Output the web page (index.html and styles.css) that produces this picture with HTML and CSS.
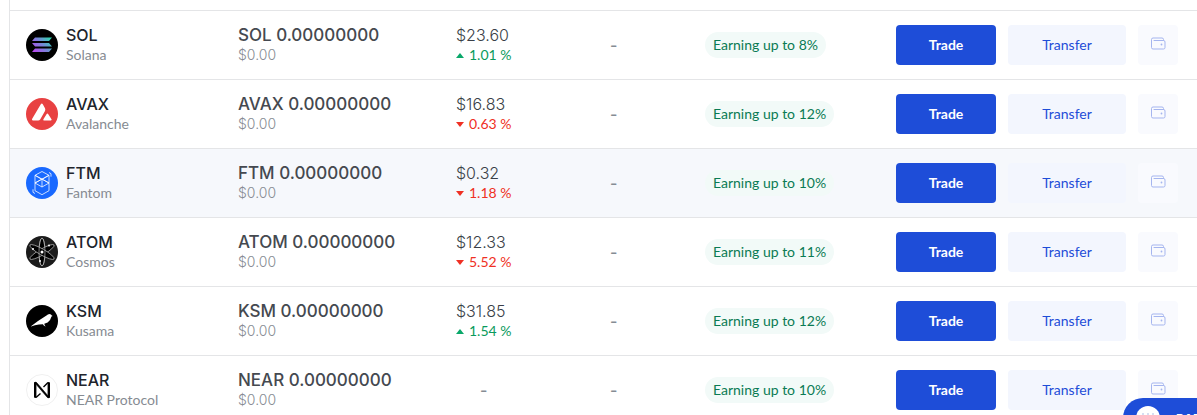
FILE: index.html
```html
<!DOCTYPE html>
<html lang="en">
<head>
    <meta charset="UTF-8">
    <meta name="viewport" content="width=device-width, initial-scale=1.0">
    <title>Wallets</title>
    <link rel="stylesheet" href="styles.css">
</head>
<body>
    <svg class="sprite" aria-hidden="true">
        <symbol id="wallet" viewBox="0 0 16 16">
            <path d="M13.500 4.500V3.500A1.500 1.500 0 0 0 12 2H3A1.500 1.500 0 0 0 1.500 3.500v8A1.500 1.500 0 0 0 3 13h10.500a1.500 1.500 0 0 0 1.500-1.500V6a1.500 1.500 0 0 0-1.500-1.500H4" fill="none" stroke="currentColor" stroke-linecap="round"/>
            <circle cx="11.500" cy="8.500" r="0.900" fill="currentColor"/>
        </symbol>
    </svg>
    <div class="panel">
    <table class="coins">
        <tbody>
            <tr>
                <td class="col-coin">
                    <div class="coin">
                        <svg class="logo" viewBox="0 0 32 32">
                            <defs>
                                <linearGradient id="sol" x1="6" y1="24" x2="26" y2="8" gradientUnits="userSpaceOnUse">
                                    <stop offset="0" stop-color="#c63cf5"/>
                                    <stop offset="0.5" stop-color="#7a82d8"/>
                                    <stop offset="1" stop-color="#22e6a8"/>
                                </linearGradient>
                            </defs>
                            <circle cx="16" cy="16" r="16"/>
                            <path d="M9 8.500h17l-3 3.500H6zM6 14h17l3 3.500H9zM9 19.500h17L23 23H6z" fill="url(#sol)"/>
                        </svg>
                        <div><div class="symbol">SOL</div><div class="name">Solana</div></div>
                    </div>
                </td>
                <td class="col-balance"><div class="amount">SOL 0.00000000</div><div class="fiat">$0.00</div></td>
                <td class="col-price"><div class="price">$23.60</div><div class="change up">1.01 %</div></td>
                <td class="col-portfolio"><span class="empty">-</span></td>
                <td class="col-earn"><span class="earn">Earning up to 8%</span></td>
                <td class="col-actions"><div class="actions">
                    <button class="btn trade">Trade</button>
                    <button class="btn transfer">Transfer</button>
                    <button class="btn wallet" aria-label="Wallet"><svg><use href="#wallet"/></svg></button>
                </div></td>
            </tr>
            <tr>
                <td class="col-coin">
                    <div class="coin">
                        <svg class="logo" viewBox="0 0 32 32">
                            <circle cx="16" cy="16" r="16" fill="#e84142"/>
                            <path d="M14.800 6.300q1-1.600 2 0l2.200 4q.6 1.300 0 2.600l-4.700 8.300q-.8 1.200-2.200 1.300H7q-1.700-.1-.8-1.700zM20.500 16.300q.9-1.400 1.800 0l3.200 5q.7 1.100-.7 1.200h-6.600q-1.500-.1-.8-1.300z" fill="#fff"/>
                        </svg>
                        <div><div class="symbol">AVAX</div><div class="name">Avalanche</div></div>
                    </div>
                </td>
                <td class="col-balance"><div class="amount">AVAX 0.00000000</div><div class="fiat">$0.00</div></td>
                <td class="col-price"><div class="price">$16.83</div><div class="change down">0.63 %</div></td>
                <td class="col-portfolio"><span class="empty">-</span></td>
                <td class="col-earn"><span class="earn">Earning up to 12%</span></td>
                <td class="col-actions"><div class="actions">
                    <button class="btn trade">Trade</button>
                    <button class="btn transfer">Transfer</button>
                    <button class="btn wallet" aria-label="Wallet"><svg><use href="#wallet"/></svg></button>
                </div></td>
            </tr>
            <tr class="active">
                <td class="col-coin">
                    <div class="coin">
                        <svg class="logo" viewBox="0 0 32 32">
                            <circle cx="16" cy="16" r="16" fill="#1969ff"/>
                            <path d="M16 4.500l7 3.800v15.400l-7 4-7-4V8.300zM9 8.300l7 4 7-4M9 16l7-4 7 4-7 4zM9 8.300l14 7.700M23 8.300L9 16M16 12.300V20M23 5.500l2 1.200v3M9 26.500l-2-1.200v-3" fill="none" stroke="#fff" stroke-width="0.900" stroke-opacity="0.850"/>
                        </svg>
                        <div><div class="symbol">FTM</div><div class="name">Fantom</div></div>
                    </div>
                </td>
                <td class="col-balance"><div class="amount">FTM 0.00000000</div><div class="fiat">$0.00</div></td>
                <td class="col-price"><div class="price">$0.32</div><div class="change down">1.18 %</div></td>
                <td class="col-portfolio"><span class="empty">-</span></td>
                <td class="col-earn"><span class="earn">Earning up to 10%</span></td>
                <td class="col-actions"><div class="actions">
                    <button class="btn trade">Trade</button>
                    <button class="btn transfer">Transfer</button>
                    <button class="btn wallet" aria-label="Wallet"><svg><use href="#wallet"/></svg></button>
                </div></td>
            </tr>
            <tr>
                <td class="col-coin">
                    <div class="coin">
                        <svg class="logo" viewBox="0 0 32 32">
                            <circle cx="16" cy="16" r="16" fill="#1b1b1b"/>
                            <g fill="#000" stroke="#b5b5b5" stroke-width="0.700">
                                <ellipse cx="16" cy="16" rx="3" ry="14"/>
                                <ellipse cx="16" cy="16" rx="3" ry="14" transform="rotate(60 16 16)"/>
                                <ellipse cx="16" cy="16" rx="3" ry="14" transform="rotate(120 16 16)"/>
                                <ellipse cx="16" cy="16" rx="3" ry="14" fill="none"/>
                            </g>
                            <g fill="#fff">
                                <circle cx="16" cy="16" r="1.500"/>
                                <circle cx="7" cy="13" r="1"/>
                                <circle cx="23" cy="9.500" r="1"/>
                                <circle cx="14" cy="25" r="1"/>
                            </g>
                        </svg>
                        <div><div class="symbol">ATOM</div><div class="name">Cosmos</div></div>
                    </div>
                </td>
                <td class="col-balance"><div class="amount">ATOM 0.00000000</div><div class="fiat">$0.00</div></td>
                <td class="col-price"><div class="price">$12.33</div><div class="change down">5.52 %</div></td>
                <td class="col-portfolio"><span class="empty">-</span></td>
                <td class="col-earn"><span class="earn">Earning up to 11%</span></td>
                <td class="col-actions"><div class="actions">
                    <button class="btn trade">Trade</button>
                    <button class="btn transfer">Transfer</button>
                    <button class="btn wallet" aria-label="Wallet"><svg><use href="#wallet"/></svg></button>
                </div></td>
            </tr>
            <tr>
                <td class="col-coin">
                    <div class="coin">
                        <svg class="logo" viewBox="0 0 32 32">
                            <circle cx="16" cy="16" r="16"/>
                            <path d="M5 21.300l7-5.300 8.500-5.500q1.300-1.500 3-1.500 1.700.1 2.300 1.400l.8.500-1.100.5q-.8 3.600-3.900 6l-3.300 1.400.4 1.400 1 1.200-1.700-.6-1.100-1.500-4 .1q-4 .6-7.900 2z" fill="#fff"/>
                        </svg>
                        <div><div class="symbol">KSM</div><div class="name">Kusama</div></div>
                    </div>
                </td>
                <td class="col-balance"><div class="amount">KSM 0.00000000</div><div class="fiat">$0.00</div></td>
                <td class="col-price"><div class="price">$31.85</div><div class="change up">1.54 %</div></td>
                <td class="col-portfolio"><span class="empty">-</span></td>
                <td class="col-earn"><span class="earn">Earning up to 12%</span></td>
                <td class="col-actions"><div class="actions">
                    <button class="btn trade">Trade</button>
                    <button class="btn transfer">Transfer</button>
                    <button class="btn wallet" aria-label="Wallet"><svg><use href="#wallet"/></svg></button>
                </div></td>
            </tr>
            <tr>
                <td class="col-coin">
                    <div class="coin">
                        <svg class="logo" viewBox="0 0 32 32">
                            <circle cx="16" cy="16" r="15.500" fill="#fff" stroke="#f0f0f0"/>
                            <path d="M9.200 9.200v13.600M22.800 9.200v13.600" fill="none" stroke="#000" stroke-width="2.400" stroke-linecap="round"/>
                            <path d="M8.500 8.500q1.500-1 2.600.5L23.500 23.500q-1.500 1-2.600-.5z" stroke="#000" stroke-width="0.500"/>
                            <path d="M10 23.500l4.500-4M22 8.500l-4.500 4.500" fill="none" stroke="#000" stroke-width="1.400"/>
                        </svg>
                        <div><div class="symbol">NEAR</div><div class="name">NEAR Protocol</div></div>
                    </div>
                </td>
                <td class="col-balance"><div class="amount">NEAR 0.00000000</div><div class="fiat">$0.00</div></td>
                <td class="col-price"><div class="no-price"><span class="empty">-</span></div></td>
                <td class="col-portfolio"><span class="empty">-</span></td>
                <td class="col-earn"><span class="earn">Earning up to 10%</span></td>
                <td class="col-actions"><div class="actions">
                    <button class="btn trade">Trade</button>
                    <button class="btn transfer">Transfer</button>
                    <button class="btn wallet" aria-label="Wallet"><svg><use href="#wallet"/></svg></button>
                </div></td>
            </tr>
        </tbody>
    </table>
    </div>
    <button class="chat">
        <svg viewBox="0 0 24 24">
            <circle cx="12" cy="12" r="12" fill="#fff"/>
            <g fill="#c9d3ee"><circle cx="7" cy="8" r="1"/><circle cx="12" cy="8" r="1"/><circle cx="17" cy="8" r="1"/></g>
        </svg>
        <span>BAE</span>
    </button>
</body>
</html>
```
FILE: styles.css
```css
body {
    margin: 0;
    padding-left: 9px;
    font-family: Lato, sans-serif;
    background: #fff;
    color: #20242c;
    overflow: hidden;
}
.sprite {
    display: none;
}
.panel {
    padding-top: 10px;
    border-left: 1px solid #e4e5e7;
}
.coins {
    width: 100%;
    table-layout: fixed;
    border-collapse: separate;
    border-spacing: 0;
}
td {
    height: 68px;
    padding: 0;
    border-top: 1px solid #e4e5e7;
    vertical-align: middle;
    white-space: nowrap;
}
.active td {
    background: #f6f8fc;
}
.col-coin {
    width: 228px;
}
.col-balance {
    width: 218px;
}
.col-price {
    width: 154px;
}
.col-portfolio {
    width: 95px;
}
.col-actions {
    width: 301px;
}
.coin {
    display: flex;
    align-items: center;
    gap: 8px;
    padding-left: 16px;
}
.logo {
    width: 32px;
    height: 32px;
}
.symbol,
.amount,
.price {
    font-family: Inter, sans-serif;
    font-size: 16px;
    line-height: 20px;
}
.symbol,
.amount {
    font-weight: 500;
}
.amount {
    font-size: 17px;
    color: #454950;
}
.price {
    font-weight: 300;
    color: #3a3f48;
}
.name,
.fiat,
.change {
    font-size: 14px;
    line-height: 20px;
}
.name,
.fiat {
    color: #868b92;
}
.fiat {
    font-family: Inter, sans-serif;
    font-weight: 300;
}
.up {
    color: #0a9a5c;
}
.down {
    color: #ef3024;
}
.change::before {
    content: "";
    display: inline-block;
    margin: 0 5px 2px 0;
    border: 4px solid transparent;
    vertical-align: middle;
}
.up::before {
    border-top: 0;
    border-bottom: 5px solid #0aa86a;
}
.down::before {
    border-bottom: 0;
    border-top: 5px solid #ef3024;
}
.empty {
    font-family: Inter, sans-serif;
    font-size: 16px;
    font-weight: 500;
    color: #858c94;
}
.no-price {
    padding-left: 24px;
}
.earn {
    display: inline-block;
    padding: 0 8px;
    border-radius: 13px;
    background: #f2faf8;
    color: #0a7b54;
    font-size: 14px;
    line-height: 26px;
}
.actions {
    display: flex;
    gap: 12px;
}
.btn {
    height: 40px;
    padding: 0 0 2px;
    border: 0;
    border-radius: 4px;
    font-family: inherit;
    font-size: 14px;
    cursor: pointer;
}
.trade {
    width: 100px;
    background: #1e4dd8;
    color: #fff;
    font-weight: 700;
}
.transfer {
    width: 118px;
    background: #f3f6fe;
    color: #1e4dd8;
}
.wallet {
    display: flex;
    align-items: center;
    justify-content: center;
    width: 40px;
    background: #f9fafe;
    color: #a5b5ef;
}
.wallet svg {
    width: 16px;
    height: 16px;
}
/* launcher sits partly outside the bottom right corner */
.chat {
    position: fixed;
    right: -50px;
    bottom: -23px;
    display: flex;
    align-items: center;
    gap: 16px;
    width: 124px;
    height: 40px;
    padding: 0 13px;
    border: 0;
    border-radius: 20px;
    background: #1e4dd8;
    color: #fff;
    font-family: Inter, sans-serif;
    font-size: 12px;
    font-weight: 700;
}
.chat svg {
    flex: none;
    width: 24px;
    height: 24px;
}
```
